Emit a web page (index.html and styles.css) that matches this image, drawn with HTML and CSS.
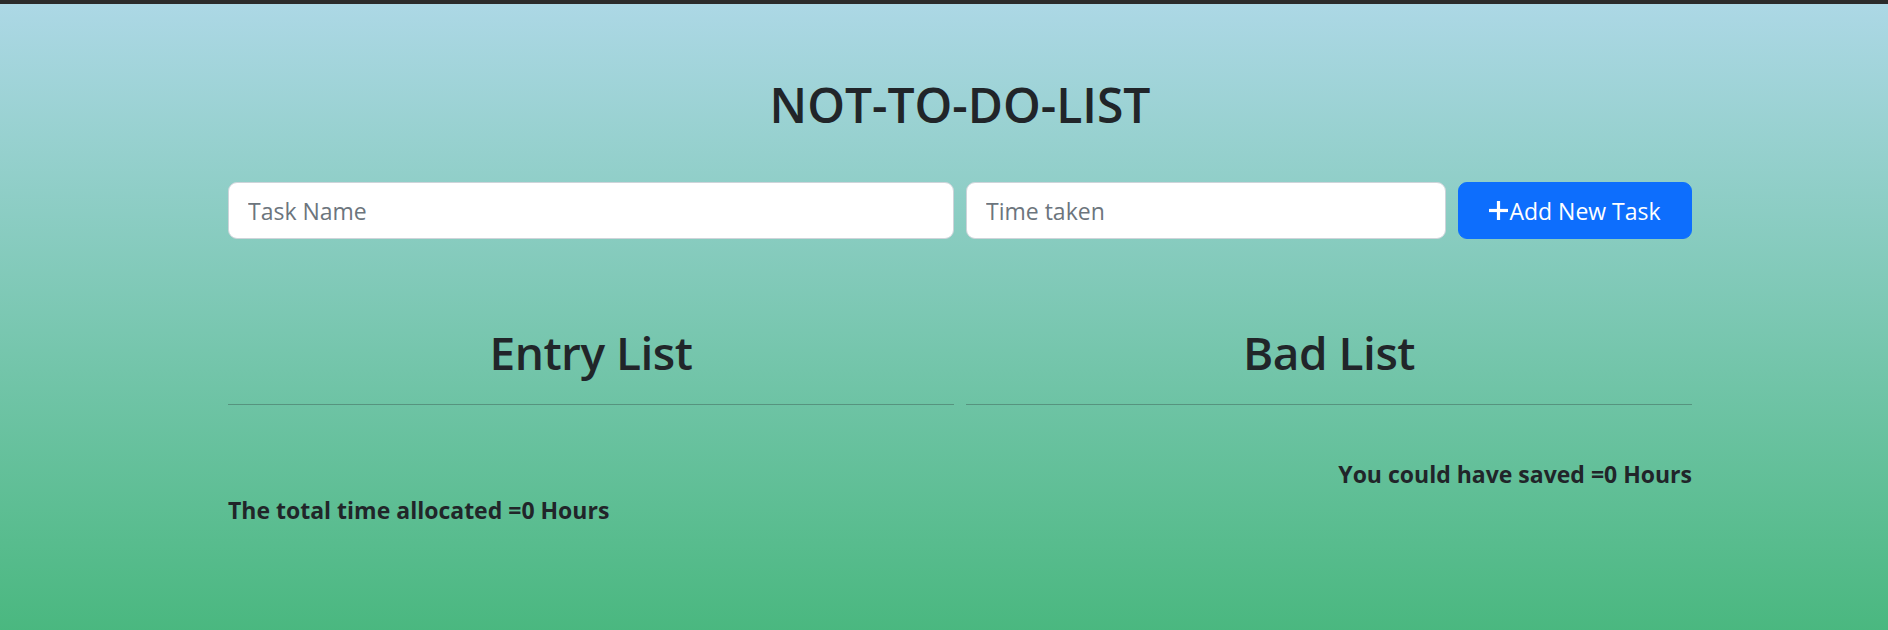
FILE: index.html
```html
<!DOCTYPE html>
<html lang="en">
<head>
<meta charset="utf-8">
<title>Not To Do List</title>
<link rel="stylesheet" href="styles.css">
</head>
<body>
<div class="topbar"></div>
<main class="page">
  <div class="container">
    <h1 class="title">NOT-TO-DO-LIST</h1>
    <form class="task-form">
      <input class="field" type="text" placeholder="Task Name">
      <input class="field" type="number" placeholder="Time taken">
      <button class="btn-add" type="button">
        <svg class="plus" viewBox="0 0 19 19" width="19" height="19" aria-hidden="true">
          <rect x="7.9" y="0" width="3.2" height="19" fill="#fff"/>
          <rect x="0" y="7.9" width="19" height="3.2" fill="#fff"/>
        </svg>Add New Task
      </button>
    </form>
    <div class="lists">
      <section class="list">
        <h2 class="list-title">Entry List</h2>
        <hr class="divider">
        <table class="list-table"><tbody></tbody></table>
      </section>
      <section class="list">
        <h2 class="list-title">Bad List</h2>
        <hr class="divider">
        <table class="list-table"><tbody></tbody></table>
        <div class="saved">You could have saved =0 Hours</div>
      </section>
    </div>
    <div class="total">The total time allocated =0 Hours</div>
  </div>
</main>
</body>
</html>
```
FILE: styles.css
```css
* { box-sizing: border-box; }
html, body { margin: 0; padding: 0; }
body {
  font-family: "Open Sans", "Noto Sans", sans-serif;
  color: #212529;
  background: #4ab480;
}
.topbar {
  height: 4px;
  background: #2b2b2b;
}
.page {
  height: 626px;
  background: linear-gradient(#add8e6, #3cb371) 0 -4px / 100% 720px no-repeat;
  overflow: hidden;
}
.container {
  width: 1464px;
  margin-left: 228px;
  padding-top: 72px;
}
.title {
  margin: 0;
  font-size: 48px;
  font-weight: 600;
  line-height: 58px;
  text-align: center;
}
.task-form {
  margin-top: 48px;
  display: grid;
  grid-template-columns: 726px 480px 234px;
  gap: 12px;
}
.field {
  height: 57px;
  border: 1px solid #ced4da;
  border-radius: 9px;
  background: #fff;
  padding: 0 19px;
  font: inherit;
  font-size: 23px;
  color: #212529;
  outline: none;
  -moz-appearance: textfield;
}
.field::placeholder { color: #6c757d; }
.field::-webkit-outer-spin-button,
.field::-webkit-inner-spin-button { -webkit-appearance: none; margin: 0; }
.btn-add {
  height: 57px;
  border: 1px solid #0d6efd;
  border-radius: 9px;
  background: #0d6efd;
  color: #fff;
  font: inherit;
  font-size: 23px;
  display: flex;
  align-items: center;
  justify-content: center;
  gap: 1px;
  padding: 0;
}
.plus { display: block; }
.lists {
  margin-top: 83px;
  display: grid;
  grid-template-columns: 1fr 1fr;
  gap: 12px;
}
.list-title {
  margin: 0;
  font-size: 46px;
  font-weight: 600;
  line-height: 60px;
  letter-spacing: -0.5px;
  text-align: center;
}
.divider {
  margin: 22px 0 0;
  border: 0;
  border-top: 1px solid rgba(33, 37, 41, 0.3);
  height: 0;
}
.list-table {
  width: 100%;
  border-collapse: collapse;
  margin-top: 24px;
}
.saved {
  margin-top: 27px;
  text-align: right;
  font-weight: 700;
  font-size: 23px;
  line-height: 36px;
}
.total {
  font-weight: 700;
  font-size: 23px;
  line-height: 36px;
}
```
